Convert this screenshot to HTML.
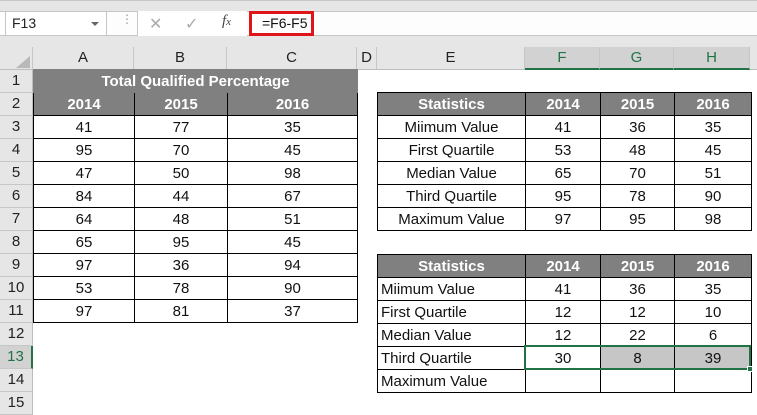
<!DOCTYPE html>
<html><head><style>
*{margin:0;padding:0;box-sizing:border-box}
body{width:757px;height:413px;overflow:hidden;background:#fff;font-family:"Liberation Sans",Arial,sans-serif;position:relative}
.a{position:absolute}
.top{left:0;top:0;width:757px;height:47px;background:#e6e6e6;border-top:1px solid #c8c8c8}
.wbar{left:0;top:11px;width:757px;height:25px;background:#fdfdfd;border-top:1px solid #c6c6c6;border-bottom:1px solid #c6c6c6}
.hdr{top:47px;height:23px;background:#e6e6e6;border-right:1px solid #c6c6c6;border-bottom:1px solid #bdbdbd;font-size:15px;color:#222;text-align:center;line-height:22px}
.rh{left:0;width:33px;height:23px;background:#e6e6e6;border-bottom:1px solid #c6c6c6;border-right:1px solid #bdbdbd;font-size:15px;color:#222;text-align:center;line-height:22px}
table{position:absolute;border-collapse:collapse;table-layout:fixed;font-size:15px}
td{border:1px solid #000;height:23px;padding:0;text-align:center;color:#111;white-space:nowrap;overflow:hidden}
.g td,td.g{background:#808080;color:#fff;font-weight:bold}
td.l{text-align:left;padding-left:3px}
</style></head><body>
<div class="a top"></div>
<div class="a wbar"></div>
<div class="a" style="left:5px;top:11px;width:102px;height:25px;background:#fff;border:1px solid #c6c6c6;font-size:14px;line-height:23px;padding-left:6px;color:#222">F13<span style="position:absolute;right:7px;top:10px;border-left:4px solid transparent;border-right:4px solid transparent;border-top:4px solid #666"></span></div>
<div class="a" style="left:121px;top:17px;color:#999;font-size:12px;line-height:5px">⋮</div>
<div class="a" style="left:137px;top:11px;width:110px;height:25px;background:#fff;border-left:1px solid #c6c6c6"></div>
<div class="a" style="left:149px;top:14px;color:#aaa;font-size:16px">✕</div>
<div class="a" style="left:185px;top:14px;color:#aaa;font-size:16px">✓</div>
<div class="a" style="left:222px;top:13px;color:#444;font-size:15px;font-style:italic;font-family:'Liberation Serif',serif">f<span style="font-size:11px">x</span></div>
<div class="a" style="left:249px;top:11px;width:65px;height:25px;border:3px solid #e0141b;font-size:14px;line-height:19px;padding-left:10px;color:#111">=F6-F5</div>

<div class="a hdr" style="left:0;width:33px"></div>
<div class="a" style="left:16px;top:56px;width:0;height:0;border-left:14px solid transparent;border-bottom:12px solid #b8b8b8"></div>
<div class="a hdr" style="left:33px;width:101px">A</div>
<div class="a hdr" style="left:134px;width:93px">B</div>
<div class="a hdr" style="left:227px;width:130px">C</div>
<div class="a hdr" style="left:357px;width:20px">D</div>
<div class="a hdr" style="left:377px;width:148px">E</div>
<div class="a hdr" style="left:525px;width:75px;background:#d2d2d2;color:#217346;border-bottom:2px solid #217346">F</div>
<div class="a hdr" style="left:600px;width:74px;background:#d2d2d2;color:#217346;border-bottom:2px solid #217346">G</div>
<div class="a hdr" style="left:674px;width:76px;background:#d2d2d2;color:#217346;border-bottom:2px solid #217346">H</div>
<div class="a hdr" style="left:750px;width:7px;border-right:none"></div>

<div class="a rh" style="top:70px">1</div>
<div class="a rh" style="top:93px">2</div>
<div class="a rh" style="top:116px">3</div>
<div class="a rh" style="top:139px">4</div>
<div class="a rh" style="top:162px">5</div>
<div class="a rh" style="top:185px">6</div>
<div class="a rh" style="top:208px">7</div>
<div class="a rh" style="top:231px">8</div>
<div class="a rh" style="top:254px">9</div>
<div class="a rh" style="top:277px">10</div>
<div class="a rh" style="top:300px">11</div>
<div class="a rh" style="top:323px">12</div>
<div class="a rh" style="top:346px;background:#d2d2d2;color:#217346;border-right:2px solid #217346">13</div>
<div class="a rh" style="top:369px">14</div>
<div class="a rh" style="top:392px">15</div>

<table style="left:33px;top:69px;width:325px">
<col style="width:101px"><col style="width:93px"><col style="width:130px">
<tr class="g"><td colspan="3" style="border-color:#808080">Total Qualified Percentage</td></tr>
<tr class="g"><td>2014</td><td>2015</td><td>2016</td></tr>
<tr><td>41</td><td>77</td><td>35</td></tr>
<tr><td>95</td><td>70</td><td>45</td></tr>
<tr><td>47</td><td>50</td><td>98</td></tr>
<tr><td>84</td><td>44</td><td>67</td></tr>
<tr><td>64</td><td>48</td><td>51</td></tr>
<tr><td>65</td><td>95</td><td>45</td></tr>
<tr><td>97</td><td>36</td><td>94</td></tr>
<tr><td>53</td><td>78</td><td>90</td></tr>
<tr><td>97</td><td>81</td><td>37</td></tr>
</table>

<table style="left:377px;top:92px;width:374px">
<col style="width:148px"><col style="width:75px"><col style="width:74px"><col style="width:77px">
<tr class="g"><td>Statistics</td><td>2014</td><td>2015</td><td>2016</td></tr>
<tr><td>Miimum Value</td><td>41</td><td>36</td><td>35</td></tr>
<tr><td>First Quartile</td><td>53</td><td>48</td><td>45</td></tr>
<tr><td>Median Value</td><td>65</td><td>70</td><td>51</td></tr>
<tr><td>Third Quartile</td><td>95</td><td>78</td><td>90</td></tr>
<tr><td>Maximum Value</td><td>97</td><td>95</td><td>98</td></tr>
</table>

<table style="left:377px;top:254px;width:374px">
<col style="width:148px"><col style="width:75px"><col style="width:74px"><col style="width:77px">
<tr class="g"><td>Statistics</td><td>2014</td><td>2015</td><td>2016</td></tr>
<tr><td class="l">Miimum Value</td><td>41</td><td>36</td><td>35</td></tr>
<tr><td class="l">First Quartile</td><td>12</td><td>12</td><td>10</td></tr>
<tr><td class="l">Median Value</td><td>12</td><td>22</td><td>6</td></tr>
<tr><td class="l">Third Quartile</td><td>30</td><td style="background:#c6c6c6">8</td><td style="background:#c6c6c6">39</td></tr>
<tr><td class="l">Maximum Value</td><td></td><td></td><td></td></tr>
</table>
<div class="a" style="left:524px;top:345px;width:227px;height:25px;border:2px solid #217346"></div>
<div class="a" style="left:747px;top:366px;width:6px;height:6px;background:#217346;border:1px solid #fff"></div>
</body></html>
